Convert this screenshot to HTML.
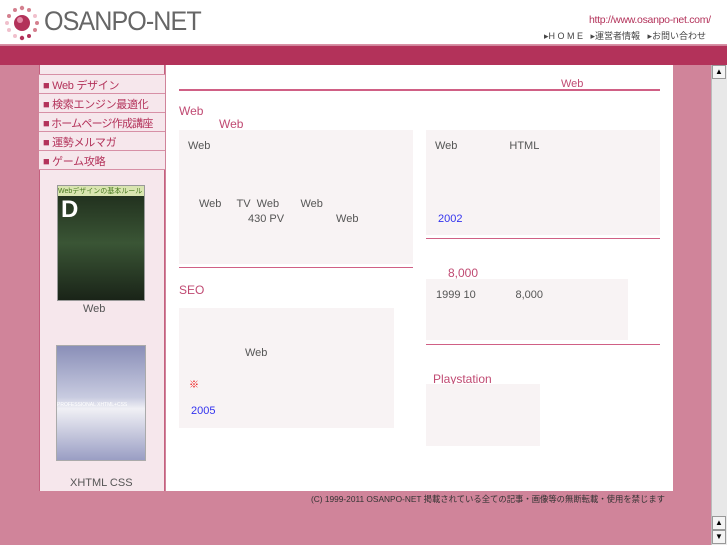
<!DOCTYPE html><html><head><meta charset="utf-8"><style>
*{margin:0;padding:0;box-sizing:border-box}
body{width:727px;height:545px;overflow:hidden;background:#d0849a;font-family:"Liberation Sans","Noto Sans CJK JP",sans-serif;position:relative;font-size:11px;color:#555}
.a{position:absolute}
.hdr{left:0;top:0;width:727px;height:45px;background:#fff;border-bottom:1px solid #d890a5}
.band{left:0;top:46px;width:727px;height:19px;background:#b3325a}
.side{left:39px;top:65px;width:126px;height:426px;background:#f6e7ec;border-left:1px solid #c4607f;border-right:1px solid #c4607f}
.nav{left:39px;width:126px;height:19px;border-top:1px solid #d790a6;font-size:11px;color:#b3325a;padding:2px 0 0 4px;background:#f6e7ec;white-space:nowrap;overflow:hidden;letter-spacing:-0.3px}
.main{left:166px;top:65px;width:507px;height:426px;background:#fff}
.hl{height:2px;background:#d06085}
.box{background:#f8f3f4}
.pk{color:#c04a72;font-size:12px}
.sb{left:711px;top:65px;width:16px;height:480px;background:#e8e8e8;border-left:1px solid #bbb}
.btn{left:712px;width:14px;height:14px;background:#f4f4f4;border:1px solid #999;font-size:8px;text-align:center;line-height:12px;color:#000}
</style></head><body>
<div class="a hdr"></div>
<svg class="a" style="left:4px;top:5px" width="36" height="36" viewBox="0 0 36 36">
<g fill="#d4808f"><circle cx="18" cy="3" r="2.2"/><circle cx="11" cy="5" r="2"/><circle cx="25" cy="5" r="2"/><circle cx="5" cy="11" r="2"/><circle cx="31" cy="11" r="2" fill="#f0c0cc"/><circle cx="3" cy="18" r="2" fill="#f0c0cc"/><circle cx="33" cy="18" r="2"/><circle cx="5" cy="25" r="2" fill="#f0c0cc"/><circle cx="31" cy="25" r="2"/><circle cx="11" cy="31" r="2" fill="#f0c0cc"/><circle cx="25" cy="31" r="2" fill="#b3325a"/><circle cx="18" cy="33" r="2.2" fill="#b3325a"/></g>
<circle cx="18" cy="18" r="8" fill="#b3325a"/><circle cx="16" cy="15" r="3" fill="#e28aa6"/></svg>
<div class="a" style="left:44px;top:6px;font-size:27px;color:#666;letter-spacing:-1px;transform:scaleX(0.93);transform-origin:0 0">OSANPO-NET</div>
<div class="a" style="left:589px;top:14px;font-size:10.5px;color:#b3325a;letter-spacing:-0.3px">http://www.osanpo-net.com/</div>
<div class="a" style="left:544px;top:29px;font-size:9px;color:#444;white-space:nowrap">▸H O M E &nbsp; ▸運営者情報 &nbsp; ▸お問い合わせ</div>
<div class="a band"></div>
<div class="a side"></div>
<div class="a nav" style="top:74px">■ Web デザイン</div>
<div class="a nav" style="top:93px">■ 検索エンジン最適化</div>
<div class="a nav" style="top:112px;letter-spacing:-0.8px">■ ホームページ作成講座</div>
<div class="a nav" style="top:131px">■ 運勢メルマガ</div>
<div class="a nav" style="top:150px">■ ゲーム攻略</div>
<div class="a" style="left:39px;top:169px;width:126px;border-top:1px solid #d790a6"></div>
<div class="a" style="left:57px;top:185px;width:88px;height:116px;background:linear-gradient(#1d2a1a,#3a5535 50%,#1a2418);border:1px solid #999"><div style="background:#d9e5b0;height:10px;font-size:7px;color:#497a20">Webデザインの基本ルール</div><div style="color:#fff;font-size:24px;font-weight:bold;margin-left:3px">D</div></div>
<div class="a" style="left:83px;top:303px;font-size:11px">Web</div>
<div class="a" style="left:56px;top:345px;width:90px;height:116px;background:linear-gradient(#8a8fb8,#c8cbe0 45%,#f0f0f5 55%,#9a9ec4);border:1px solid #aaa;font-size:5px;color:#fff;padding-top:56px;white-space:nowrap">PROFESSIONAL XHTML+CSS</div>
<div class="a" style="left:70px;top:477px;font-size:11px">XHTML CSS</div>
<div class="a main"></div>
<div class="a hl" style="left:179px;top:89px;width:481px"></div>
<div class="a pk" style="left:561px;top:78px;font-size:11px">Web</div>
<div class="a pk" style="left:179px;top:104px">Web</div>
<div class="a pk" style="left:219px;top:117px">Web</div>
<div class="a box" style="left:179px;top:130px;width:234px;height:134px"></div>
<div class="a" style="left:188px;top:140px">Web</div>
<div class="a" style="left:199px;top:198px;white-space:pre">Web     TV  Web       Web</div>
<div class="a" style="left:248px;top:213px;white-space:pre">430 PV                 Web</div>
<div class="a box" style="left:426px;top:130px;width:234px;height:105px"></div>
<div class="a" style="left:435px;top:140px;white-space:pre">Web                 HTML</div>
<div class="a" style="left:438px;top:213px;color:#3333ee">2002</div>
<div class="a hl" style="left:426px;top:238px;width:234px;height:1px"></div>
<div class="a hl" style="left:179px;top:267px;width:234px;height:1px"></div>
<div class="a pk" style="left:448px;top:266px">8,000</div>
<div class="a box" style="left:426px;top:279px;width:202px;height:61px"></div>
<div class="a" style="left:436px;top:289px;white-space:pre">1999 10             8,000</div>
<div class="a hl" style="left:426px;top:344px;width:234px;height:1px"></div>
<div class="a pk" style="left:179px;top:283px">SEO</div>
<div class="a box" style="left:179px;top:308px;width:215px;height:120px"></div>
<div class="a" style="left:245px;top:347px">Web</div>
<div class="a" style="left:189px;top:376px;color:#e00;font-size:10px">※</div>
<div class="a" style="left:191px;top:405px;color:#3333ee">2005</div>
<div class="a pk" style="left:433px;top:372px">Playstation</div>
<div class="a box" style="left:426px;top:384px;width:114px;height:62px"></div>
<div class="a" style="left:311px;top:493px;font-size:8.5px;color:#333;white-space:nowrap;transform:scaleX(0.98);transform-origin:0 0">(C) 1999-2011 OSANPO-NET 掲載されている全ての記事・画像等の無断転載・使用を禁じます</div>
<div class="a sb"></div>
<div class="a btn" style="top:65px">▲</div>
<div class="a btn" style="top:516px">▲</div>
<div class="a btn" style="top:530px">▼</div>
</body></html>
